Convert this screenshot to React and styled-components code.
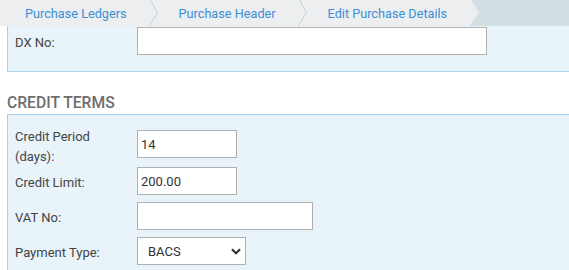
import React from 'react';
import styled, { createGlobalStyle } from 'styled-components';

const GlobalStyle = createGlobalStyle`
  body {
    margin: 0;
    background: #fff;
    font-family: Roboto, "Liberation Sans", Arial, sans-serif;
    overflow: hidden;
  }
`;

const Page = styled.div`
  width: 569px;
  height: 270px;
  overflow: hidden;
`;

const Crumbs = styled.nav`
  display: flex;
  height: 26px;
  background: #d4dfe4;
`;

const Crumb = styled.a`
  display: flex;
  align-items: center;
  height: 26px;
  padding: 0 22px 0 ${(p) => (p.$first ? '25px' : '20px')};
  background: #eceeef;
  color: #3d8fd6;
  font-size: 12.7px;
  text-decoration: none;
  white-space: nowrap;
`;

const Sep = styled.svg`
  display: block;
  flex: none;
  width: 10px;
  height: 26px;
  background: ${(p) => (p.$last ? '#d4dfe4' : '#eceeef')};
`;

const Content = styled.main`
  padding-left: 7px;
  width: 600px;
`;

const Panel = styled.section`
  background: #e8f3fa;
  border: 1px solid #a9d2ef;
  border-top: ${(p) => (p.$cut ? 'none' : '1px solid #a9d2ef')};
  padding: ${(p) => (p.$cut ? '1px 0 16px 7px' : '15px 0 16px 7px')};
`;

const Heading = styled.h3`
  margin: 21px 0 2px;
  font-size: 15.7px;
  font-weight: 500;
  line-height: 19px;
  color: #6e6e6e;
  text-transform: uppercase;
`;

const Fields = styled.div`
  display: grid;
  row-gap: 7px;
`;

const Row = styled.div`
  display: flex;
  align-items: flex-start;
`;

const Label = styled.label`
  flex: none;
  box-sizing: border-box;
  width: 122px;
  padding: ${(p) => (p.$tall ? '0 15px 0 0' : '6px 15px 0 0')};
  margin: ${(p) => (p.$tall ? '-3px 0 -7px' : '0')};
  font-size: 13px;
  line-height: 20px;
  color: #444;
`;

const Input = styled.input`
  box-sizing: border-box;
  width: ${(p) => p.$w}px;
  height: 28px;
  margin: 0;
  padding: 0 3px;
  border: 1px solid #b0b0b0;
  border-radius: 0;
  background: #fff;
  font-family: inherit;
  font-size: 13px;
  color: #333;
  outline: none;
`;

const SelectWrap = styled.div`
  position: relative;
  width: 109px;
  height: 28px;
`;

const Select = styled.select`
  box-sizing: border-box;
  width: 100%;
  height: 28px;
  margin: 0;
  padding: 0 0 0 10px;
  border: 1px solid #b0b0b0;
  border-radius: 0;
  background: #fff;
  appearance: none;
  font-family: inherit;
  font-size: 13px;
  color: #333;
  outline: none;
`;

const Caret = styled.svg`
  position: absolute;
  right: 5px;
  top: 11px;
  width: 10px;
  height: 7px;
  pointer-events: none;
`;

const crumbs = ['Purchase Ledgers', 'Purchase Header', 'Edit Purchase Details'];

export default function App() {
  return (
    <Page>
      <GlobalStyle />
      <Crumbs>
        {crumbs.map((c, i) => {
          const last = i === crumbs.length - 1;
          return (
            <React.Fragment key={c}>
              <Crumb href="#" $first={i === 0}>
                {c}
              </Crumb>
              <Sep $last={last} viewBox="0 0 10 26">
                {last ? (
                  <polygon points="0,0 2,0 10,13 0,26" fill="#eceeef" />
                ) : (
                  <polyline
                    points="1.5,0 8.5,13 0,26"
                    fill="none"
                    stroke="#c9d0d4"
                    strokeWidth="1"
                  />
                )}
              </Sep>
            </React.Fragment>
          );
        })}
      </Crumbs>
      <Content>
        <Panel $cut>
          <Row>
            <Label>DX No:</Label>
            <Input $w={350} defaultValue="" />
          </Row>
        </Panel>
        <Heading>Credit Terms</Heading>
        <Panel>
          <Fields>
            <Row>
              <Label $tall>Credit Period (days):</Label>
              <Input $w={100} defaultValue="14" />
            </Row>
            <Row>
              <Label>Credit Limit:</Label>
              <Input $w={100} defaultValue="200.00" />
            </Row>
            <Row>
              <Label>VAT No:</Label>
              <Input $w={176} defaultValue="" />
            </Row>
            <Row>
              <Label>Payment Type:</Label>
              <SelectWrap>
                <Select defaultValue="BACS">
                  <option>BACS</option>
                  <option>Cheque</option>
                  <option>Cash</option>
                </Select>
                <Caret viewBox="0 0 10 7">
                  <polyline
                    points="1,1.2 5,5.2 9,1.2"
                    fill="none"
                    stroke="#333"
                    strokeWidth="2.2"
                  />
                </Caret>
              </SelectWrap>
            </Row>
          </Fields>
        </Panel>
      </Content>
    </Page>
  );
}
